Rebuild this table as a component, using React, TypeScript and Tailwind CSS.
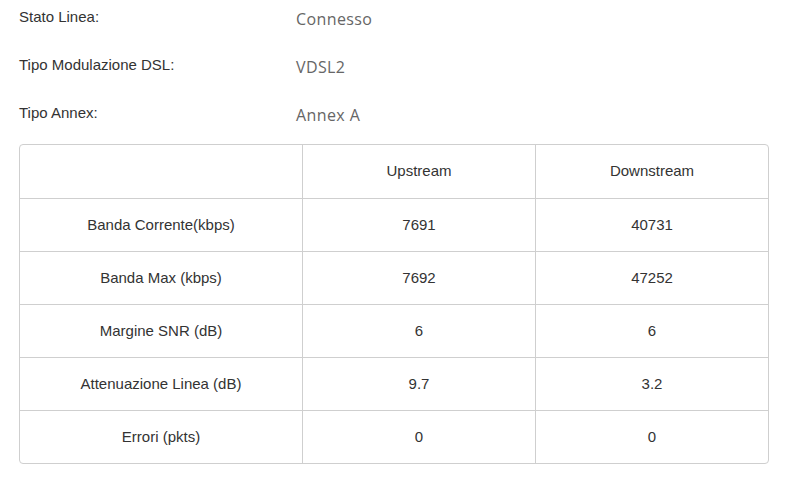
const info = [
  { label: 'Stato Linea:', value: 'Connesso' },
  { label: 'Tipo Modulazione DSL:', value: 'VDSL2' },
  { label: 'Tipo Annex:', value: 'Annex A' },
]

const rows = [
  { name: '', up: 'Upstream', down: 'Downstream' },
  { name: 'Banda Corrente(kbps)', up: '7691', down: '40731' },
  { name: 'Banda Max (kbps)', up: '7692', down: '47252' },
  { name: 'Margine SNR (dB)', up: '6', down: '6' },
  { name: 'Attenuazione Linea (dB)', up: '9.7', down: '3.2' },
  { name: 'Errori (pkts)', up: '0', down: '0' },
]

export default function App() {
  return (
    <div className="min-h-screen w-[789px] bg-white pl-[19px] font-['Liberation_Sans',Arial,sans-serif] text-[15px] text-[#333]">
      <div className="flex flex-col gap-[13px]">
        {info.map((r) => (
          <div key={r.label} className="flex h-[35px] items-center">
            <span className="w-[277px]">{r.label}</span>
            <span className="mt-[2px] font-['Open_Sans',sans-serif] text-[16px] tracking-[0.4px] text-[#666]">
              {r.value}
            </span>
          </div>
        ))}
      </div>

      <div className="mt-[13px] w-[750px] overflow-hidden rounded-[4px] border border-[#cfcfcf]">
        {rows.map((r, i) => (
          <div
            key={i}
            className={`grid h-[53px] grid-cols-[282px_233px_1fr] ${i > 0 ? 'border-t border-[#cfcfcf]' : ''}`}
          >
            <div className="flex items-center justify-center">{r.name}</div>
            <div className="flex items-center justify-center border-l border-[#cfcfcf]">{r.up}</div>
            <div className="flex items-center justify-center border-l border-[#cfcfcf]">{r.down}</div>
          </div>
        ))}
      </div>
    </div>
  )
}
